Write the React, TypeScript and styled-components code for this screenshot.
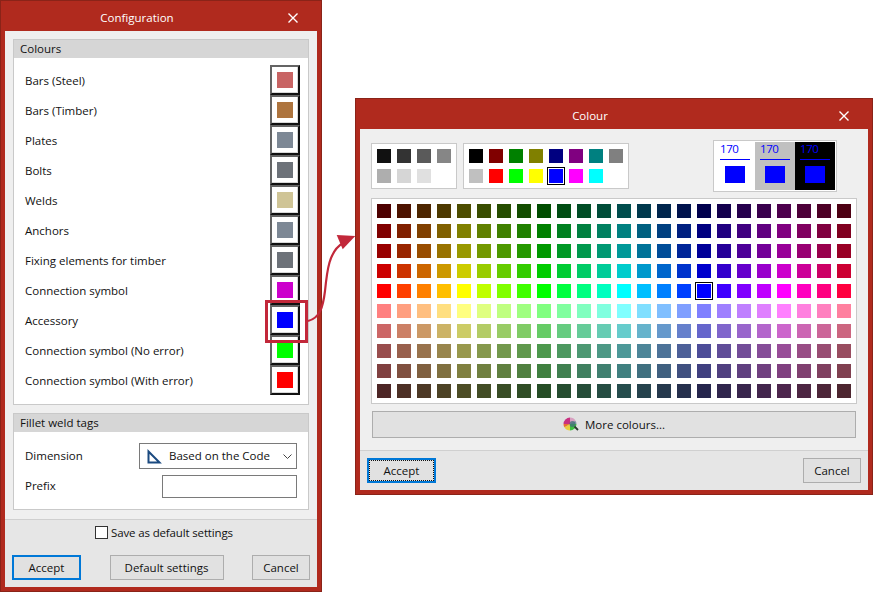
import React from 'react';
import styled, { createGlobalStyle } from 'styled-components';

const RED = '#b02a1e';
const FONT = '"Open Sans", "Noto Sans", sans-serif';

const GlobalStyle = createGlobalStyle`
  html, body {
    margin: 0;
    padding: 0;
    background: #fff;
  }
  body {
    font-family: ${FONT};
    font-size: 11.5px;
    color: #111;
  }
`;

const Page = styled.div`
  position: relative;
  width: 873px;
  height: 592px;
  overflow: hidden;
  display: flex;
  align-items: flex-start;
  gap: 33px;
`;

const Dialog = styled.div<{ $width: number; $height: number; $top?: number }>`
  box-sizing: border-box;
  flex: none;
  width: ${p => p.$width}px;
  height: ${p => p.$height}px;
  margin-top: ${p => p.$top || 0}px;
  background: ${RED};
  border: 1px solid #8a2318;
  padding: 0 4px 4px;
  display: flex;
  flex-direction: column;
`;

const TitleBar = styled.div`
  box-sizing: border-box;
  flex: none;
  height: 30px;
  padding: 2px 48px 0 0;
  display: flex;
  align-items: center;
  justify-content: center;
  position: relative;
  color: #fff;
`;

const CloseIcon = styled.svg`
  position: absolute;
  right: 19px;
  top: 12px;
  width: 10px;
  height: 10px;
`;

const Body = styled.div`
  flex: 1;
  background: #efefef;
  display: flex;
  flex-direction: column;
  min-height: 0;
`;

const Main = styled.div`
  flex: 1;
  padding: 8px 8px 0;
  display: flex;
  flex-direction: column;
  gap: 8px;
`;

const Group = styled.div`
  background: #fff;
  border: 1px solid #c9c9c9;
`;

const GroupHeader = styled.div`
  height: 18px;
  line-height: 18px;
  background: #d6d6d6;
  padding-left: 6px;
`;

const ColourList = styled.div`
  padding: 7px 8px 9px 11px;
  display: flex;
  flex-direction: column;
`;

const ColourRow = styled.div`
  height: 30px;
  display: flex;
  align-items: center;
  justify-content: space-between;
`;

const ColourButton = styled.div`
  box-sizing: border-box;
  width: 30px;
  height: 30px;
  background: #fff;
  border: 2px solid;
  border-color: #646464 #111 #111 #646464;
  box-shadow: inset -1px -1px 0 #d8d8d8;
  display: flex;
  align-items: center;
  justify-content: center;
`;

const ColourChip = styled.div<{ $color: string }>`
  width: 16px;
  height: 16px;
  background: ${p => p.$color};
`;

const FormBody = styled.div`
  padding: 11px;
  display: flex;
  flex-direction: column;
  gap: 6px;
`;

const FormRow = styled.div`
  display: flex;
  align-items: center;
  justify-content: space-between;
`;

const FormLabel = styled.span`
  margin-bottom: 2px;
`;

const Select = styled.div`
  box-sizing: border-box;
  width: 158px;
  height: 26px;
  border: 1px solid #7a7a7a;
  background: #fff;
  display: flex;
  align-items: center;
  padding: 0 4px 0 7px;
  gap: 7px;
`;

const SelectText = styled.span`
  flex: 1;
  white-space: nowrap;
  margin-bottom: 2px;
`;

const TextBox = styled.div`
  box-sizing: border-box;
  width: 135px;
  height: 23px;
  border: 1px solid #7a7a7a;
  background: #fff;
`;

const SaveRow = styled.div`
  box-sizing: border-box;
  flex: none;
  height: 30px;
  border-top: 1px solid #cfcfcf;
  background: #e6e6e6;
  display: flex;
  align-items: center;
  justify-content: center;
  gap: 3px;
  padding: 0 0 4px 6px;
  letter-spacing: -0.15px;
`;

const CheckBox = styled.div`
  box-sizing: border-box;
  width: 13px;
  height: 13px;
  border: 1px solid #333;
  background: #fff;
`;

const Footer = styled.div<{ $padTop: number }>`
  flex: none;
  background: #e6e6e6;
  display: flex;
  justify-content: space-between;
  padding: ${p => p.$padTop}px 7px 7px;
`;

const Button = styled.div<{ $width: number; $primary?: boolean }>`
  box-sizing: border-box;
  width: ${p => p.$width}px;
  height: 25px;
  background: #e1e1e1;
  border: ${p => (p.$primary ? '2px solid #0078d7' : '1px solid #adadad')};
  display: flex;
  align-items: center;
  justify-content: center;
  position: relative;
`;

const FocusRing = styled.div`
  position: absolute;
  inset: 0;
  border: 1px dotted #111;
`;

const ColourMain = styled.div`
  flex: 1;
  padding: 14px 11px 0;
  display: flex;
  flex-direction: column;
`;

const TopRow = styled.div`
  display: flex;
  align-items: flex-start;
  height: 50px;
  gap: 6px;
`;

const Palette = styled.div<{ $columns: number }>`
  box-sizing: border-box;
  background: #fff;
  border: 1px solid #c9c9c9;
  padding: 5px;
  display: grid;
  grid-template-columns: repeat(${p => p.$columns}, 14px);
  grid-auto-rows: 14px;
  gap: 6px;
`;

const Swatch = styled.div<{ $color: string; $selected?: boolean }>`
  width: 14px;
  height: 14px;
  background: ${p => p.$color};
  position: relative;
  ${p =>
    p.$selected &&
    `
    &::after {
      content: '';
      position: absolute;
      inset: -2px;
      border: 1px solid #000;
    }
  `}
`;

const Preview = styled.div`
  box-sizing: border-box;
  margin: -3px 20px 0 auto;
  height: 52px;
  padding: 1px;
  background: #fff;
  border: 1px solid #c9c9c9;
  display: flex;
`;

const PreviewCell = styled.div<{ $bg: string }>`
  width: 40px;
  height: 48px;
  background: ${p => p.$bg};
  display: flex;
  flex-direction: column;
  align-items: center;
  color: #00f;
`;

const PreviewValue = styled.div`
  box-sizing: border-box;
  width: 30px;
  height: 18px;
  line-height: 14px;
  border-bottom: 1px solid #00f;
  font-size: 11.5px;
  letter-spacing: -0.4px;
  margin-bottom: 6px;
`;

const PreviewChip = styled.div`
  width: 20px;
  height: 17px;
  background: #00f;
`;

const Grid = styled(Palette)`
  margin-top: 5px;
`;

const MoreButton = styled.div`
  box-sizing: border-box;
  margin: 7px 1px 0;
  height: 27px;
  background: #e1e1e1;
  border: 1px solid #adadad;
  display: flex;
  align-items: center;
  justify-content: center;
  gap: 6px;
`;

const FooterRule = styled.div`
  flex: none;
  height: 1px;
  background: #d0d0d0;
  margin-top: 12px;
`;

const Highlight = styled.div`
  position: absolute;
  left: 265px;
  top: 300px;
  width: 43px;
  height: 43px;
  box-sizing: border-box;
  border: 3px solid #c2283a;
`;

const Arrow = styled.svg`
  position: absolute;
  left: 296px;
  top: 225px;
  width: 70px;
  height: 125px;
`;

const hsv = (h: number, s: number, v: number) => {
  const f = (n: number) => {
    const k = (n + h / 60) % 6;
    return Math.round(255 * (v - v * s * Math.max(0, Math.min(k, 4 - k, 1))));
  };
  return `rgb(${f(5)},${f(3)},${f(1)})`;
};

const SHADES: [number, number][] = [
  [1, 0.3],
  [1, 0.5],
  [1, 0.6],
  [1, 0.8],
  [1, 1],
  [0.5, 1],
  [0.5, 0.8],
  [0.5, 0.6],
  [0.5, 0.5],
  [0.5, 0.3],
];

const GREYS = ['#111111', '#333333', '#5a5a5a', '#868686', '#aeaeae', '#d6d6d6', '#e0e0e0'];
const BASICS = [
  '#000000', '#800000', '#008000', '#808000', '#000080', '#800080', '#008080', '#808080',
  '#c0c0c0', '#ff0000', '#00ff00', '#ffff00', '#0000ff', '#ff00ff', '#00ffff',
];

const COLOUR_ROWS = [
  ['Bars (Steel)', '#c86464'],
  ['Bars (Timber)', '#ad743e'],
  ['Plates', '#7d8895'],
  ['Bolts', '#6d7279'],
  ['Welds', '#cfc496'],
  ['Anchors', '#7d8895'],
  ['Fixing elements for timber', '#6d7279'],
  ['Connection symbol', '#cc00cc'],
  ['Accessory', '#0000ff'],
  ['Connection symbol (No error)', '#00ff00'],
  ['Connection symbol (With error)', '#ff0000'],
];

const Close = () => (
  <CloseIcon viewBox="0 0 10 10">
    <path d="M0.5 0.5 L9.5 9.5 M9.5 0.5 L0.5 9.5" stroke="#fff" strokeWidth="1.4" />
  </CloseIcon>
);

const App = () => (
  <Page>
    <GlobalStyle />
    <Dialog $width={322} $height={592}>
      <TitleBar>
        Configuration
        <Close />
      </TitleBar>
      <Body>
        <Main>
          <Group>
            <GroupHeader>Colours</GroupHeader>
            <ColourList>
              {COLOUR_ROWS.map(([label, color]) => (
                <ColourRow key={label}>
                  {label}
                  <ColourButton>
                    <ColourChip $color={color} />
                  </ColourButton>
                </ColourRow>
              ))}
            </ColourList>
          </Group>
          <Group>
            <GroupHeader>Fillet weld tags</GroupHeader>
            <FormBody>
              <FormRow>
                <FormLabel>Dimension</FormLabel>
                <Select>
                  <svg width="15" height="15" viewBox="0 0 15 15">
                    <path d="M1.5 2.5 V13.5 H12.5 Z" fill="none" stroke="#1b4a80" strokeWidth="2" />
                  </svg>
                  <SelectText>Based on the Code</SelectText>
                  <svg width="9" height="5" viewBox="0 0 9 5">
                    <path d="M0.5 0.5 L4.5 4.5 L8.5 0.5" fill="none" stroke="#444" />
                  </svg>
                </Select>
              </FormRow>
              <FormRow>
                <FormLabel>Prefix</FormLabel>
                <TextBox />
              </FormRow>
            </FormBody>
          </Group>
        </Main>
        <SaveRow>
          <CheckBox />
          Save as default settings
        </SaveRow>
        <Footer $padTop={6}>
          <Button $width={69} $primary>
            Accept
          </Button>
          <Button $width={114}>Default settings</Button>
          <Button $width={58}>Cancel</Button>
        </Footer>
      </Body>
    </Dialog>

    <Dialog $width={518} $height={397} $top={98}>
      <TitleBar>
        Colour
        <Close />
      </TitleBar>
      <Body>
        <ColourMain>
          <TopRow>
            <Palette $columns={4}>
              {GREYS.map(c => (
                <Swatch key={c} $color={c} />
              ))}
            </Palette>
            <Palette $columns={8}>
              {BASICS.map(c => (
                <Swatch key={c} $color={c} $selected={c === '#0000ff'} />
              ))}
            </Palette>
            <Preview>
              {['#ffffff', '#c0c0c0', '#000000'].map(bg => (
                <PreviewCell key={bg} $bg={bg}>
                  <PreviewValue>170</PreviewValue>
                  <PreviewChip />
                </PreviewCell>
              ))}
            </Preview>
          </TopRow>
          <Grid $columns={24}>
            {SHADES.flatMap(([s, v], r) =>
              Array.from({ length: 24 }, (_, c) => (
                <Swatch key={`${r}-${c}`} $color={hsv(c * 15, s, v)} $selected={r === 4 && c === 16} />
              )),
            )}
          </Grid>
          <MoreButton>
            <svg width="16" height="15" viewBox="0 0 16 15">
              <path d="M7 7 L7 0.5 A6.5 6.5 0 0 1 12.6 3.7 Z" fill="#d8a0c0" />
              <path d="M7 7 L12.6 3.7 A6.5 6.5 0 0 1 13.5 7 Z" fill="#8a9aa8" />
              <path d="M7 7 L13.5 7 A6.5 6.5 0 0 1 7 13.5 Z" fill="#40c040" />
              <path d="M7 7 L7 13.5 A6.5 6.5 0 0 1 1.4 10.3 Z" fill="#e8d040" />
              <path d="M7 7 L1.4 10.3 A6.5 6.5 0 0 1 0.5 7 Z" fill="#e87030" />
              <path d="M7 7 L0.5 7 A6.5 6.5 0 0 1 7 0.5 Z" fill="#c83080" />
              <circle cx="9.5" cy="7" r="3" fill="#3f6f78" fillOpacity="0.75" />
              <path d="M11.5 9.5 L15 13" stroke="#2c3a30" strokeWidth="1.8" />
            </svg>
            More colours...
          </MoreButton>
        </ColourMain>
        <FooterRule />
        <Footer $padTop={7}>
          <Button $width={69} $primary>
            <FocusRing />
            Accept
          </Button>
          <Button $width={58}>Cancel</Button>
        </Footer>
      </Body>
    </Dialog>

    <Highlight />
    <Arrow viewBox="0 0 70 125">
      <path d="M12 96 C24 93 27 82 29 66 C31 46 33 26 47 18" fill="none" stroke="#c2283a" strokeWidth="2.2" />
      <path d="M40.7 10 L59.3 11 L46.7 24.3 Z" fill="#c2283a" />
    </Arrow>
  </Page>
);

export default App;
